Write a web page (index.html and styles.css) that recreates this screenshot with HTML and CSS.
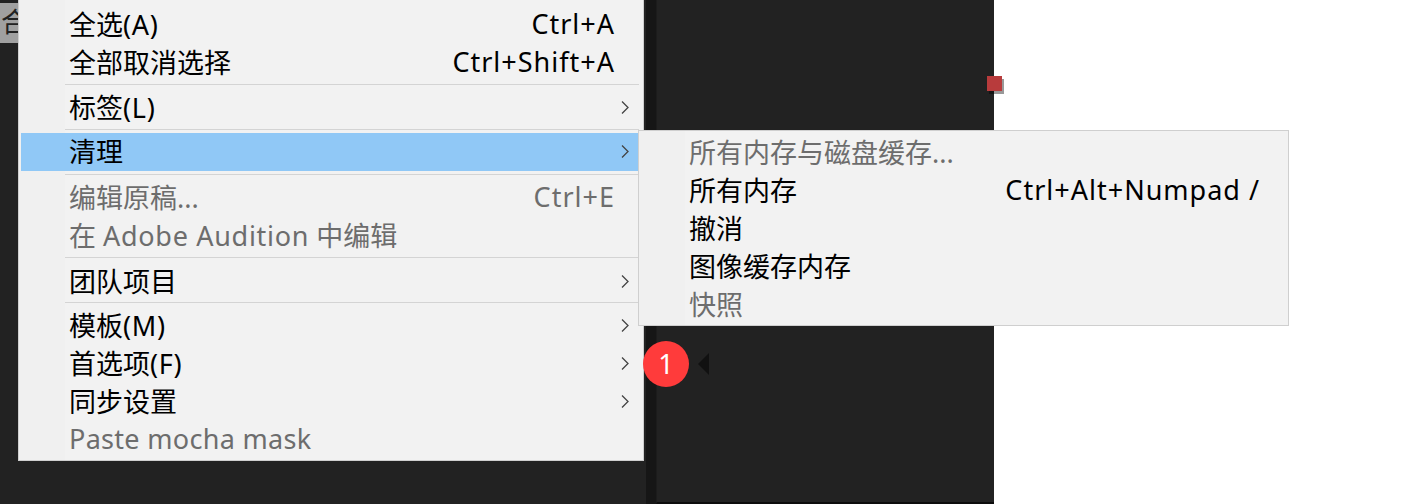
FILE: index.html
```html
<!DOCTYPE html>
<html lang="zh-CN">
<head>
  <meta charset="UTF-8">
  <title>编辑菜单</title>
  <link rel="stylesheet" href="styles.css">
</head>
<body>
  <div class="workspace">
    <div class="left-panel">
      <div class="tab">合</div>
    </div>
    <div class="divider"></div>
    <div class="center-panel">
      <span class="arrow-marker"></span>
    </div>
    <div class="preview"></div>
  </div>

  <span class="red-handle"></span>

  <div class="menu main-menu">
    <div class="item"><span>全选<span class="lt">(A)</span></span><span class="key">Ctrl+A</span></div>
    <div class="item"><span>全部取消选择</span><span class="key">Ctrl+Shift+A</span></div>
    <div class="sep sep-a"></div>
    <div class="item"><span>标签<span class="lt">(L)</span></span><svg class="chevron" viewBox="0 0 8 13"><path d="M1 .5 7 6.5 1 12.5"/></svg></div>
    <div class="sep sep-b"></div>
    <div class="item active"><span>清理</span><svg class="chevron" viewBox="0 0 8 13"><path d="M1 .5 7 6.5 1 12.5"/></svg></div>
    <div class="sep sep-c"></div>
    <div class="item off"><span>编辑原稿...</span><span class="key">Ctrl+E</span></div>
    <div class="item off"><span>在 <span class="lt">Adobe Audition</span> 中编辑</span></div>
    <div class="sep sep-d"></div>
    <div class="item"><span>团队项目</span><svg class="chevron" viewBox="0 0 8 13"><path d="M1 .5 7 6.5 1 12.5"/></svg></div>
    <div class="sep sep-e"></div>
    <div class="item"><span>模板<span class="lt">(M)</span></span><svg class="chevron" viewBox="0 0 8 13"><path d="M1 .5 7 6.5 1 12.5"/></svg></div>
    <div class="item"><span>首选项<span class="lt">(F)</span></span><svg class="chevron" viewBox="0 0 8 13"><path d="M1 .5 7 6.5 1 12.5"/></svg></div>
    <div class="item"><span>同步设置</span><svg class="chevron" viewBox="0 0 8 13"><path d="M1 .5 7 6.5 1 12.5"/></svg></div>
    <div class="item off"><span class="mocha">Paste mocha mask</span></div>
  </div>

  <div class="menu sub-menu">
    <div class="item off"><span>所有内存与磁盘缓存...</span></div>
    <div class="item"><span>所有内存</span><span class="key">Ctrl+Alt+Numpad /</span></div>
    <div class="item"><span>撤消</span></div>
    <div class="item"><span>图像缓存内存</span></div>
    <div class="item off"><span>快照</span></div>
  </div>

  <span class="badge">1</span>
</body>
</html>
```

FILE: styles.css
```css
/* General */
html, body {
  margin: 0;
  padding: 0;
}

body {
  width: 1406px;
  height: 504px;
  overflow: hidden;
  position: relative;
  background-color: #222;
  font-family: "Noto Sans", "Noto Sans CJK SC", sans-serif;
  font-size: 27px;
  color: #000;
}

/* Fondo */
.workspace {
  display: flex;
  height: 504px;
}

.left-panel {
  width: 646px;
  padding-top: 3px;
  box-sizing: border-box;
  background-color: #222;
}

.tab {
  width: 18px;
  height: 40px;
  overflow: hidden;
  background-color: #a0a0a0;
  color: #222;
  font-size: 27px;
  line-height: 38px;
  text-indent: 1px;
}

.divider {
  width: 10px;
  background-color: #161616;
}

.center-panel {
  width: 338px;
  box-sizing: border-box;
  padding: 353px 0 0 41px;
  background-color: #222;
  border-bottom: 2px solid #0c0c0c;
  border-left: 1px solid #1c1c1c;
}

.arrow-marker {
  display: block;
  width: 0;
  height: 0;
  border-top: 11px solid transparent;
  border-bottom: 11px solid transparent;
  border-right: 11px solid #111;
}

.preview {
  flex: 1;
  background-color: #fff;
}

.red-handle {
  position: absolute;
  left: 987px;
  top: 76px;
  width: 15px;
  height: 15px;
  background-color: #b83b3c;
  box-shadow: 2px 3px 0 rgba(0, 0, 0, 0.4);
}

/* Menus */
.menu {
  position: absolute;
  box-sizing: border-box;
  background: linear-gradient(to right, #f0f0f0 46px, #f2f2f2 46px);
  border: 1px solid #cfcfcf;
}

.main-menu {
  left: 18px;
  top: -1px;
  width: 626px;
  height: 462px;
  padding: 6px 2px 0;
}

.sub-menu {
  left: 638px;
  top: 130px;
  width: 651px;
  height: 196px;
  padding: 3px 2px 0;
}

.item {
  display: flex;
  align-items: center;
  justify-content: space-between;
  height: 34px;
  padding: 0 26px 4px 48px;
  white-space: nowrap;
}

.sub-menu .item {
  padding-right: 26px;
}

.item.active {
  background-color: #90c8f6;
}

.item.off {
  color: #6d6d6d;
}

.key {
  letter-spacing: 1px;
}

.lt {
  letter-spacing: 0.7px;
}

.mocha {
  letter-spacing: 0.3px;
}

.chevron {
  width: 8px;
  height: 13px;
  margin-top: 2px;
  margin-right: -14px;
  fill: none;
  stroke: #444;
  stroke-width: 1.3;
}

/* Separadores */
.sep {
  margin-left: 44px;
  margin-right: 2px;
  border-top: 1px solid #d4d4d4;
}

.sep-a {
  margin-top: 2px;
  margin-bottom: 4px;
}

.sep-b {
  margin-top: 2px;
  margin-bottom: 3px;
}

.sep-c {
  margin-top: 3px;
  margin-bottom: 4px;
}

.sep-d {
  margin-top: 2px;
  margin-bottom: 5px;
}

.sep-e {
  margin-top: 1px;
  margin-bottom: 4px;
}

.badge {
  position: absolute;
  left: 643px;
  top: 341px;
  width: 46px;
  height: 46px;
  border-radius: 50%;
  background-color: #ff3b3b;
  color: #fff;
  font-size: 27px;
  line-height: 46px;
  text-align: center;
}
```
